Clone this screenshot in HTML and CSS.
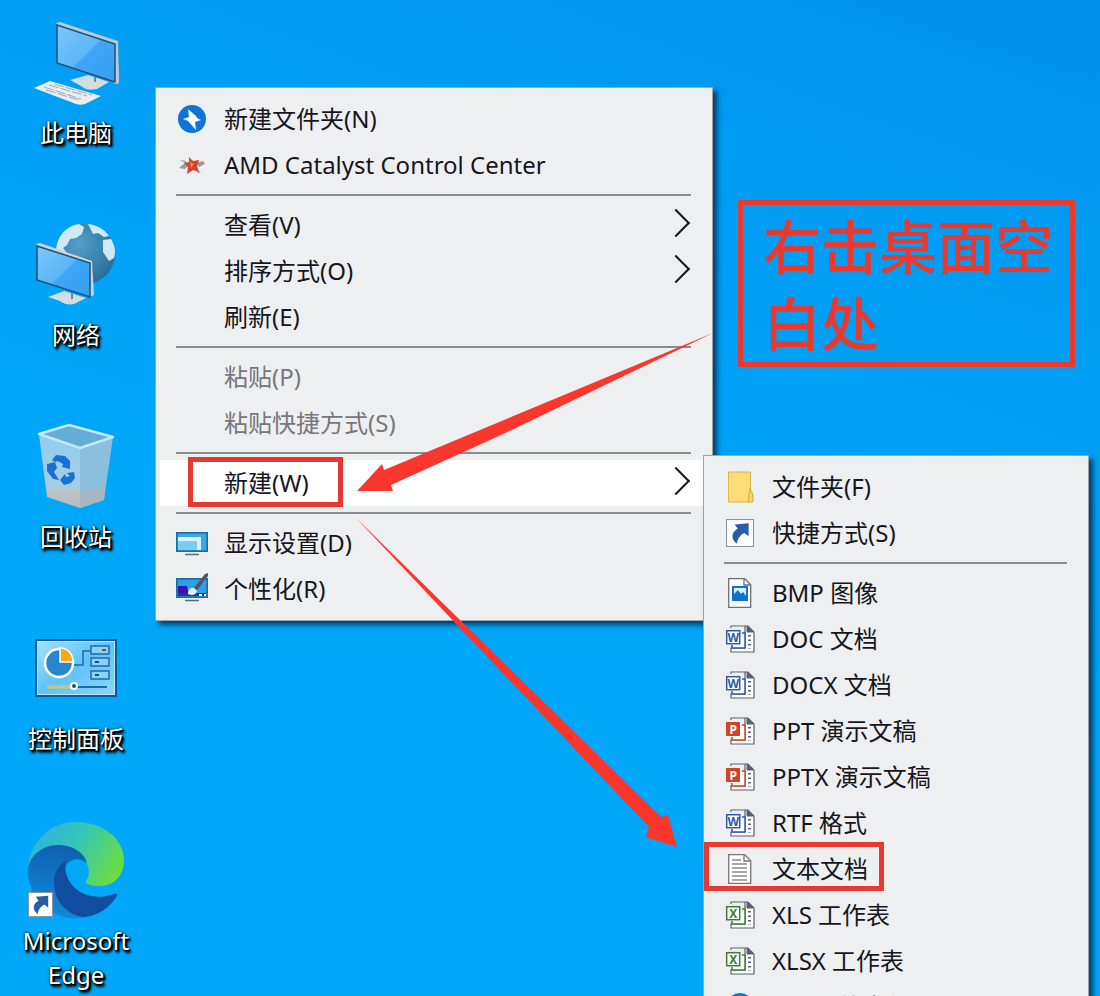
FILE: index.html
```html
<!DOCTYPE html>
<html lang="zh-CN">
<head>
    <meta charset="UTF-8">
    <meta name="viewport" content="width=device-width, initial-scale=1.0">
    <title>新建文本文档</title>
    <link rel="stylesheet" href="styles.css">
</head>
<body>
    <!-- 共用图标 -->
    <svg class="sprite" aria-hidden="true">
        <defs>
            <linearGradient id="screen" x1="0" y1="0" x2="1" y2="1">
                <stop offset="0" stop-color="#7cc8fb"/>
                <stop offset="0.5" stop-color="#5bb6f9"/>
                <stop offset="0.52" stop-color="#3fa6f8"/>
                <stop offset="1" stop-color="#369ff5"/>
            </linearGradient>
            <symbol id="bolt" viewBox="0 0 32 32">
                <circle cx="16" cy="16" r="14" fill="#0f74d8"/>
                <path d="M12 6l8 7 1 2 4 2-6 2 1 8-8-9-5-2 6-2z" fill="#fff"/>
            </symbol>
            <symbol id="arrow-link" viewBox="0 0 26 26">
                <rect x="0.5" y="0.5" width="25" height="25" fill="#fff" stroke="#8b93a0"/>
                <path d="M10 23C4 18 5 12 11 9L8 5l13-1v12l-4-3c-4 2-6 5-7 10z" fill="#2b5ca6"/>
            </symbol>
            <symbol id="office" viewBox="0 0 32 32">
                <path d="M7 5V3h17l6 6v20H7v-4h14V3" fill="#fff" stroke="#596070" stroke-width="1.2"/>
                <path d="M23 3v6h6z" fill="#596070" stroke="#596070"/>
                <path d="M25.500 12v14" stroke="#596070" stroke-width="3" stroke-dasharray="1.500 3" fill="none"/>
                <path d="M18 10h3v15H8v-3" fill="#fff" stroke="currentColor" stroke-width="1.5"/>
            </symbol>
            <symbol id="word" viewBox="0 0 32 32">
                <use href="#office"/>
                <rect x="2.7" y="7.7" width="13" height="13" fill="#fff" stroke="currentColor" stroke-width="1.5"/>
                <text x="9.2" y="18.5" class="letter" fill="currentColor">W</text>
            </symbol>
            <symbol id="ppt" viewBox="0 0 32 32">
                <use href="#office"/>
                <rect x="2" y="7" width="14" height="14" rx="1" fill="currentColor"/>
                <text x="9.2" y="18.5" class="letter" fill="#fff">P</text>
            </symbol>
            <symbol id="excel" viewBox="0 0 32 32">
                <use href="#office"/>
                <rect x="2.7" y="7.7" width="13" height="13" fill="#fff" stroke="currentColor" stroke-width="1.5"/>
                <text x="9.2" y="18.8" class="letter" fill="currentColor">X</text>
            </symbol>
        </defs>
    </svg>

    <main class="desktop">
        <nav class="shortcuts">
            <a href="#" class="shortcut">
                <svg viewBox="28 14 96 96">
                    <path d="M56 23l61 19 2 41-4 1z" fill="#c7d6dd"/>
                    <path d="M56 23l4-1 58 19 1 42-4 1-1-40z" fill="#b7cbd5"/>
                    <path d="M70 80l18-5 21 7-12 7c-8 2-12 0-16-3z" fill="#d3dde1"/>
                    <path d="M95 77v5" stroke="#708692" stroke-width="2"/>
                    <path d="M57 25l58 19v38L57 63z" fill="url(#screen)" stroke="#24506f" stroke-width="1.5"/>
                    <path d="M34 88l16-7 51 15-16 8c-3 1-6 1-9 0z" fill="#e8eef1"/>
                    <path d="M44 87l37 12M49 85l38 11M54 84l38 11M46 90l33 10" stroke="#9aa8b0" stroke-width="1" stroke-dasharray="10 2" fill="none"/>
                </svg>
                <span>此电脑</span>
            </a>
            <a href="#" class="shortcut">
                <svg viewBox="28 216 96 96">
                    <defs>
                        <radialGradient id="globe" cx="0.4" cy="0.35" r="0.7">
                            <stop offset="0" stop-color="#539fc8"/>
                            <stop offset="1" stop-color="#256e99"/>
                        </radialGradient>
                    </defs>
                    <circle cx="85" cy="254" r="30" fill="url(#globe)"/>
                    <path d="M56 250c1-14 10-24 23-26l5 3-2 7-6 4-6 1-3 6-4 3 4 5-7-2z" fill="#cfeaf5"/>
                    <path d="M88 224c9 1 16 5 21 12l-5 1-6-4-5 1zM103 240l8-1c4 7 5 12 3 19l-5 3-6-9z" fill="#cfeaf5"/>
                    <path d="M36 244l4-1 52 18 2 34-4 2z" fill="#c5d5dd"/>
                    <path d="M48 297l16-6 22 7-12 6c-6 1-10 0-14-3z" fill="#d3dde1"/>
                    <path d="M72 293v6" stroke="#708692" stroke-width="2"/>
                    <path d="M37 246l53 17v34l-53-17z" fill="url(#screen)" stroke="#24506f" stroke-width="1.5"/>
                </svg>
                <span>网络</span>
            </a>
            <a href="#" class="shortcut">
                <svg viewBox="28 418 96 96">
                    <defs>
                        <linearGradient id="bin" x1="0" y1="0" x2="0" y2="1">
                            <stop offset="0" stop-color="#8fcdf0"/>
                            <stop offset="0.7" stop-color="#a7cde3"/>
                            <stop offset="0.8" stop-color="#c0c2c4"/>
                            <stop offset="1" stop-color="#b4bbc0"/>
                        </linearGradient>
                    </defs>
                    <path d="M39 435l41 13v60l-33-11z" fill="url(#bin)"/>
                    <path d="M80 448l33-11-9 63-24 8z" fill="#8bbfdd"/>
                    <path d="M80 494l25-8-1 14-24 8z" fill="#a7b7c1"/>
                    <path d="M39 434l30-9 44 12-33 11z" fill="#64add6" stroke="#c5e8f8" stroke-width="2.500" stroke-linejoin="round"/>
                    <g fill="#1a70d2">
                        <path d="M52 460l4-5 9 1 5 5v8l-8-2 1-3-5-3-3 1z"/>
                        <path d="M47 464l8-2 2 6-3 4 5 8-6-1-6-8z"/>
                        <path d="M67 473l7-1 1 6-4 5-7 2-4-5 5-6 1 3 4-1z"/>
                    </g>
                </svg>
                <span>回收站</span>
            </a>
            <a href="#" class="shortcut">
                <svg viewBox="28 620 96 96">
                    <defs>
                        <linearGradient id="panel" x1="0" y1="0" x2="1" y2="1">
                            <stop offset="0" stop-color="#a5e0fd"/>
                            <stop offset="0.5" stop-color="#5fc3f7"/>
                            <stop offset="1" stop-color="#8fd5fa"/>
                        </linearGradient>
                    </defs>
                    <rect x="35" y="639" width="82" height="58" fill="#0d5d9d"/>
                    <rect x="37.5" y="641.5" width="77" height="53" fill="url(#panel)" stroke="#b5e5fb"/>
                    <circle cx="59" cy="663" r="14" fill="#2686cf" stroke="#fff" stroke-width="2.5"/>
                    <path d="M60 662v-14c8 0 13 6 13 14z" fill="#f9a91c" stroke="#fff" stroke-width="1.5"/>
                    <path d="M74 665h9v-14h7" fill="none" stroke="#176ba8" stroke-width="1.5"/>
                    <g fill="#8ad2f7" stroke="#1d6ca5" stroke-width="1.5">
                        <rect x="91" y="646" width="18" height="8"/>
                        <rect x="91" y="658" width="18" height="8"/>
                        <rect x="91" y="671" width="18" height="8"/>
                    </g>
                    <path d="M102 650h4" stroke="#a23e32" stroke-width="2"/>
                    <path d="M95 662h4M95 675h4" stroke="#12547f" stroke-width="2"/>
                    <path d="M74 687h33" stroke="#176ba8" stroke-width="2"/>
                    <path d="M47 687h24" stroke="#d9c06a" stroke-width="3"/>
                    <circle cx="74" cy="686" r="3" fill="#14557f" stroke="#fff" stroke-width="2"/>
                </svg>
                <span>控制面板</span>
            </a>
            <a href="#" class="shortcut">
                <svg viewBox="28 822 96 96">
                    <defs>
                        <linearGradient id="edgeTop" x1="0" y1="0.2" x2="1" y2="0.6">
                            <stop offset="0" stop-color="#2fafe6"/>
                            <stop offset="0.5" stop-color="#35c8b3"/>
                            <stop offset="1" stop-color="#6bdc3f"/>
                        </linearGradient>
                        <linearGradient id="edgeLeft" x1="0.6" y1="0" x2="0.4" y2="1">
                            <stop offset="0" stop-color="#0f5fae"/>
                            <stop offset="1" stop-color="#1289dc"/>
                        </linearGradient>
                    </defs>
                    <path d="M28 867c3-27 23-45 48-45 27 0 48 17 48 38 0 16-10 26-25 26-8 0-13-2-13-4 0-3 3-4 3-10 0-12-14-25-31-25-14 0-25 9-30 20z" fill="url(#edgeTop)"/>
                    <path d="M28 870c1-14 14-25 30-25 16 0 27 9 29 18-7-6-17-5-21 3-8 14 3 37 27 49-31 13-66-12-65-45z" fill="url(#edgeLeft)"/>
                    <path d="M66 860c-7 5-12 13-12 23 0 18 13 32 30 34 14-1 25-9 33-21 1-2-1-3-3-2-27 10-53-8-48-34z" fill="#124c9e"/>
                    <use href="#arrow-link" x="28" y="892" width="25" height="25"/>
                </svg>
                <span>Microsoft Edge</span>
            </a>
        </nav>

        <!-- 桌面右键菜单 -->
        <ul class="menu menu-main">
            <li><button type="button"><svg class="icon"><use href="#bolt"/></svg>新建文件夹(N)</button></li>
            <li><button type="button">
                <svg class="icon" viewBox="0 0 32 32">
                    <path d="M3 19l7-6 3 3-4 4zM20 14l7-2 2 3-6 3zM4 11l6 1-1 2zM21 21l4 2-3 1z" fill="#a39a98"/>
                    <path d="M13 8l4 4 6-1-2 6 2 6-6-2-6 4 1-7-4-4 5-1z" fill="#d9412c"/>
                    <path d="M14 13l4 2-3 4z" fill="#f58a6b"/>
                </svg>AMD Catalyst Control Center</button></li>
            <li class="line"></li>
            <li><button type="button" class="more"><span class="icon"></span>查看(V)</button></li>
            <li><button type="button" class="more"><span class="icon"></span>排序方式(O)</button></li>
            <li><button type="button"><span class="icon"></span>刷新(E)</button></li>
            <li class="line"></li>
            <li><button type="button" disabled><span class="icon"></span>粘贴(P)</button></li>
            <li><button type="button" disabled><span class="icon"></span>粘贴快捷方式(S)</button></li>
            <li class="line"></li>
            <li><button type="button" class="more active"><span class="icon"></span>新建(W)</button></li>
            <li class="line"></li>
            <li><button type="button">
                <svg class="icon" viewBox="0 0 32 32">
                    <rect x="0.8" y="5.8" width="30.4" height="18.4" fill="#3ba9e8" stroke="#176f9f" stroke-width="1.6"/>
                    <path d="M2 10h23v13h-4v-9H2z" fill="#d8f3fd"/>
                    <path d="M2 14h19v9H2z" fill="#79cdf3"/>
                    <path d="M9 27.5h14" stroke="#4b7285" stroke-width="1.5"/>
                </svg>显示设置(D)</button></li>
            <li><button type="button">
                <svg class="icon" viewBox="0 0 32 32">
                    <rect x="0.8" y="5.8" width="30.4" height="18.4" fill="#2f9fe9" stroke="#176f9f" stroke-width="1.6"/>
                    <path d="M2 13h9l2 10H2z" fill="#3a12b4"/>
                    <path d="M2 20h28v3H2z" fill="#2631a8"/>
                    <path d="M18 15L29 1l3-1v3L21 17z" fill="#4d5562"/>
                    <path d="M12 21c0-5 3-7 6-6l3 3c-1 4-5 5-9 3z" fill="#e4f3fa"/>
                    <path d="M23 22h3M28 22h2" stroke="#fff" stroke-width="2"/>
                    <path d="M9 27.5h14" stroke="#4b7285" stroke-width="1.5"/>
                </svg>个性化(R)</button></li>
        </ul>

        <!-- “新建”子菜单 -->
        <ul class="menu menu-new">
            <li><button type="button">
                <svg class="icon" viewBox="0 0 32 32">
                    <path d="M4.5 1h22v30h-22z" fill="#fbdc76" stroke="#dcb548"/>
                    <path d="M24 31l2-14 3 7v7z" fill="#f8d566" stroke="#d5a93a"/>
                </svg>文件夹(F)</button></li>
            <li><button type="button"><svg class="icon"><use href="#arrow-link" x="2" y="2" width="28" height="28"/></svg>快捷方式(S)</button></li>
            <li class="line"></li>
            <li><button type="button">
                <svg class="icon" viewBox="0 0 32 32">
                    <path d="M4.7 1.7h16l6 6v22.6h-22z" fill="#fff" stroke="#69717e" stroke-width="1.3"/>
                    <path d="M20 2v6h6" fill="none" stroke="#69717e" stroke-width="1.3"/>
                    <rect x="8" y="9" width="16" height="15" fill="#0c73cf"/>
                    <path d="M10 11h12v8l-3-4-2 2-3-4-4 4z" fill="#d8effc"/>
                </svg>BMP 图像</button></li>
            <li><button type="button"><svg class="icon word"><use href="#word"/></svg>DOC 文档</button></li>
            <li><button type="button"><svg class="icon word"><use href="#word"/></svg>DOCX 文档</button></li>
            <li><button type="button"><svg class="icon ppt"><use href="#ppt"/></svg>PPT 演示文稿</button></li>
            <li><button type="button"><svg class="icon ppt"><use href="#ppt"/></svg>PPTX 演示文稿</button></li>
            <li><button type="button"><svg class="icon word"><use href="#word"/></svg>RTF 格式</button></li>
            <li><button type="button">
                <svg class="icon" viewBox="0 0 32 32">
                    <path d="M4.7 1.7h16l6 6v22.6h-22z" fill="#fff" stroke="#777" stroke-width="1.3"/>
                    <path d="M20 2v6h6" fill="none" stroke="#777" stroke-width="1.3"/>
                    <path d="M8 7h9M8 11h15M8 15h15M8 19h15M8 23h15M8 27h15" stroke="#8b8b8b" stroke-width="1.5"/>
                </svg>文本文档</button></li>
            <li><button type="button"><svg class="icon excel"><use href="#excel"/></svg>XLS 工作表</button></li>
            <li><button type="button"><svg class="icon excel"><use href="#excel"/></svg>XLSX 工作表</button></li>
            <li><button type="button"><svg class="icon"><use href="#bolt"/></svg>ZIP 压缩文件</button></li>
        </ul>

        <!-- 红色标注 -->
        <p class="note">右击桌面空白处</p>
        <div class="mark mark-new"></div>
        <div class="mark mark-txt"></div>
        <svg class="arrows" viewBox="0 0 1100 996" aria-hidden="true">
            <path d="M713 333L384 470l-2-6-25 27h36l-2-6 110-50z"/>
            <path d="M356 518l305 299 7-2 9 32-31-10 3-10-190-200z"/>
        </svg>
    </main>
</body>
</html>
```

FILE: styles.css
```css
* {
    box-sizing: border-box;
}

body {
    margin: 0;
    font-family: "Noto Sans", "Noto Sans CJK SC", sans-serif;
    font-size: 24px;
    color: #16161c;
}

.sprite {
    position: absolute;
    width: 0;
    height: 0;
}

.desktop {
    position: relative;
    height: 100vh;
    overflow: hidden;
    background:
        linear-gradient(197deg, rgba(0, 110, 215, 0.15) 0%, rgba(0, 130, 225, 0.08) 17%, transparent 18%),
        linear-gradient(200deg, #0096ee 0%, #009ff5 30%, #00a6fa 55%, #00a8fb 100%);
}

/* 桌面图标 */
.shortcuts {
    display: grid;
    grid-auto-rows: 202px;
    width: 152px;
    padding-top: 14px;
}

.shortcut {
    display: flex;
    flex-direction: column;
    align-items: center;
    gap: 6px;
    color: #fff;
    line-height: 34px;
    text-align: center;
    text-decoration: none;
    text-shadow: 1px 1px 1px #000, 2px 2px 2px #000, 2px 3px 3px #000, 0 0 3px #000;
}

.shortcut svg {
    width: 96px;
    height: 96px;
    flex: none;
}

/* 菜单 */
.menu {
    position: absolute;
    margin: 0;
    padding: 8px 4px;
    list-style: none;
    background: #eeeff0;
    border: 1px solid #a0a4a8;
    box-shadow: 4px 4px 5px rgba(0, 20, 40, 0.7);
}

.menu-main {
    left: 155px;
    top: 87px;
    width: 558px;
}

.menu-new {
    left: 703px;
    top: 455px;
    width: 386px;
}

.menu button {
    display: flex;
    align-items: center;
    gap: 16px;
    width: 100%;
    height: 46px;
    padding: 0 18px 0 16px;
    border: 0;
    background: none;
    color: inherit;
    font: inherit;
    line-height: 46px;
    white-space: nowrap;
    text-align: left;
}

.menu button:disabled {
    color: #77777c;
}

.menu button.active {
    background: #fff;
}

.menu .line {
    height: 14px;
    margin: 0 17px 0 16px;
    padding-top: 6px;
}

.menu .line::before {
    content: "";
    display: block;
    height: 2px;
    background: #8a8b8e;
}

.icon {
    width: 32px;
    height: 32px;
    flex: none;
}

.more::after {
    content: "";
    width: 18px;
    height: 18px;
    margin: 0 4px 4px auto;
    border: solid #16161c;
    border-width: 2px 2px 0 0;
    transform: rotate(45deg);
}

.word {
    color: #2f5aa8;
}

.ppt {
    color: #cf4426;
}

.excel {
    color: #3b7d35;
}

.letter {
    font-size: 12px;
    font-weight: bold;
    text-anchor: middle;
}

/* 标注 */
.note {
    position: absolute;
    left: 738px;
    top: 200px;
    width: 337px;
    margin: 0;
    padding: 3px 10px 0 20px;
    border: 5px solid #e6392f;
    color: #e6392f;
    font-size: 58px;
    font-weight: 500;
    line-height: 77px;
}

.mark {
    position: absolute;
    border: 5px solid #e6392f;
}

.mark-new {
    left: 188px;
    top: 457px;
    width: 155px;
    height: 50px;
}

.mark-txt {
    left: 704px;
    top: 842px;
    width: 180px;
    height: 49px;
}

.arrows {
    position: absolute;
    left: 0;
    top: 0;
    width: 1100px;
    height: 996px;
    fill: #fb362c;
    pointer-events: none;
}
```
